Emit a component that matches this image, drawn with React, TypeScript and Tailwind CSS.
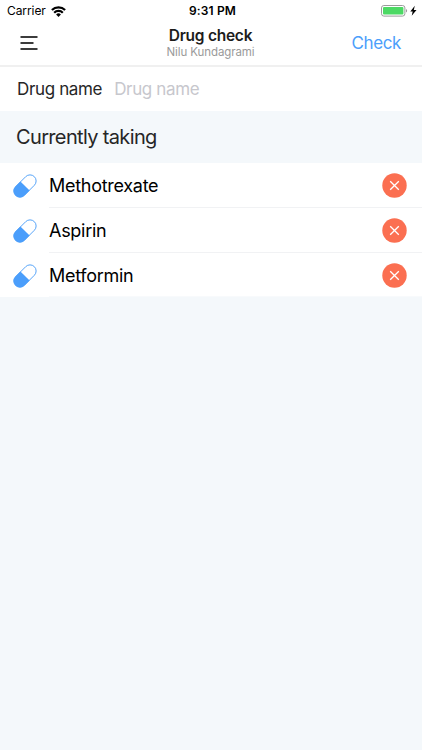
import React, { useState } from 'react';

interface Drug {
  id: number;
  name: string;
}

const initialDrugs: Drug[] = [
  { id: 1, name: 'Methotrexate' },
  { id: 2, name: 'Aspirin' },
  { id: 3, name: 'Metformin' },
];

const WifiIcon: React.FC = () => (
  <svg width="15" height="11" viewBox="0 0 15 11" fill="none" stroke="#000" strokeWidth="2.2">
    <path d="M.9 4.1a9.3 9.3 0 0 1 13.2 0" />
    <path d="M3.2 6.7a6 6 0 0 1 8.6 0" />
    <path d="M7.5 10.9 5.1 8.5a3.3 3.3 0 0 1 4.8 0z" fill="#000" stroke="none" />
  </svg>
);

const BatteryIcon: React.FC = () => (
  <svg width="36" height="12" viewBox="0 0 36 12">
    <rect x="0.5" y="0.5" width="23.4" height="10.6" rx="2.4" fill="#fff" stroke="#9b9b9b" />
    <rect x="2" y="2" width="20.4" height="7.6" rx="1" fill="#4cd964" />
    <path d="M25 4.1c1.5.5 1.5 2.9 0 3.4z" fill="#9b9b9b" />
    <path d="M33.8.7 29.3 6.4h2.4l-1 4.4 4.8-5.9h-2.7z" fill="#000" />
  </svg>
);

const PillIcon: React.FC = () => (
  <svg width="24" height="24" viewBox="0 0 24 24">
    <g transform="rotate(45 12 12)">
      <rect x="5.9" y="-1.2" width="12.2" height="26.4" rx="6.1" fill="#fff" stroke="#4f9ff8" strokeWidth="0.9" />
      <path d="M5.5 12h13v7.1a6.5 6.5 0 0 1-13 0z" fill="#4b9efb" />
    </g>
  </svg>
);

const RemoveIcon: React.FC = () => (
  <svg width="25" height="25" viewBox="0 0 25 25">
    <circle cx="12.5" cy="12.5" r="12.2" fill="#fb6f51" />
    <path d="m8.2 8.2 8.6 8.6m0-8.6-8.6 8.6" stroke="#fff" strokeWidth="1.3" />
  </svg>
);

const StatusBar: React.FC = () => (
  <div className="flex h-5 items-center justify-between pl-[7px] pr-[5px] pt-[2px] text-black">
    <div className="flex w-[120px] items-center gap-[5px]">
      <span className="text-[12px] leading-none tracking-[-0.08px]">Carrier</span>
      <WifiIcon />
    </div>
    <span className="pl-px text-[12px] font-semibold leading-none tracking-[0.15px]">9:31 PM</span>
    <div className="flex w-[120px] justify-end">
      <BatteryIcon />
    </div>
  </div>
);

const NavBar: React.FC = () => (
  <div className="flex h-[47px] items-center justify-between border-b-2 border-[#f0f0f0] pl-5 pr-[21px]">
    <button className="flex w-20" aria-label="Menu">
      <svg width="18" height="16" viewBox="0 0 18 16" stroke="#3c3c3c" strokeWidth="2">
        <path d="M.5 2h17M.5 8h13M.5 14h17" />
      </svg>
    </button>
    <div className="pt-px text-center">
      <h1 className="text-[15.5px] font-semibold leading-[18px] tracking-[-0.25px] text-[#1c1c1c]">Drug check</h1>
      <p className="text-[11.5px] leading-[15px] tracking-[-0.1px] text-[#9a9a9a]">Nilu Kundagrami</p>
    </div>
    <button className="w-20 pt-[3px] text-right text-[17px] tracking-[-0.4px] text-[#4b9efb]">Check</button>
  </div>
);

interface DrugRowProps {
  drug: Drug;
  onRemove: (id: number) => void;
}

const DrugRow: React.FC<DrugRowProps> = ({ drug, onRemove }) => (
  <li className="group flex h-[44.8px] items-center pl-[13px]">
    <div className="pt-[2px]">
      <PillIcon />
    </div>
    <div className="ml-3 flex h-full flex-1 items-center justify-between border-b border-[#f1f2f4] pr-[15px] pt-[2px] group-last:border-[#f8fafc]">
      <span className="text-[18px] tracking-[-0.28px] text-black">{drug.name}</span>
      <button onClick={() => onRemove(drug.id)} aria-label={`Remove ${drug.name}`}>
        <RemoveIcon />
      </button>
    </div>
  </li>
);

const App: React.FC = () => {
  const [drugs, setDrugs] = useState(initialDrugs);
  const [query, setQuery] = useState('');

  const handleRemove = (id: number) => setDrugs(drugs.filter((drug) => drug.id !== id));

  return (
    <div className="min-h-screen bg-[#f4f8fb] font-['Inter',sans-serif]">
      <header className="bg-white">
        <StatusBar />
        <NavBar />
      </header>

      {/* Drug search */}
      <label className="flex h-[43.5px] items-center gap-3 bg-white pl-[17px] pt-px text-[17px]">
        <span className="tracking-[-0.35px] text-[#262626]">Drug name</span>
        <input
          className="w-60 bg-transparent tracking-[-0.35px] outline-none placeholder:text-[#c7c7cd]"
          placeholder="Drug name"
          value={query}
          onChange={(e) => setQuery(e.target.value)}
        />
      </label>

      <h2 className="flex h-[52.5px] items-center pl-4 text-[20px] tracking-[-0.65px] text-[#262626]">
        Currently taking
      </h2>

      <ul className="bg-white">
        {drugs.map((drug) => (
          <DrugRow key={drug.id} drug={drug} onRemove={handleRemove} />
        ))}
      </ul>
    </div>
  );
};

export default App;
